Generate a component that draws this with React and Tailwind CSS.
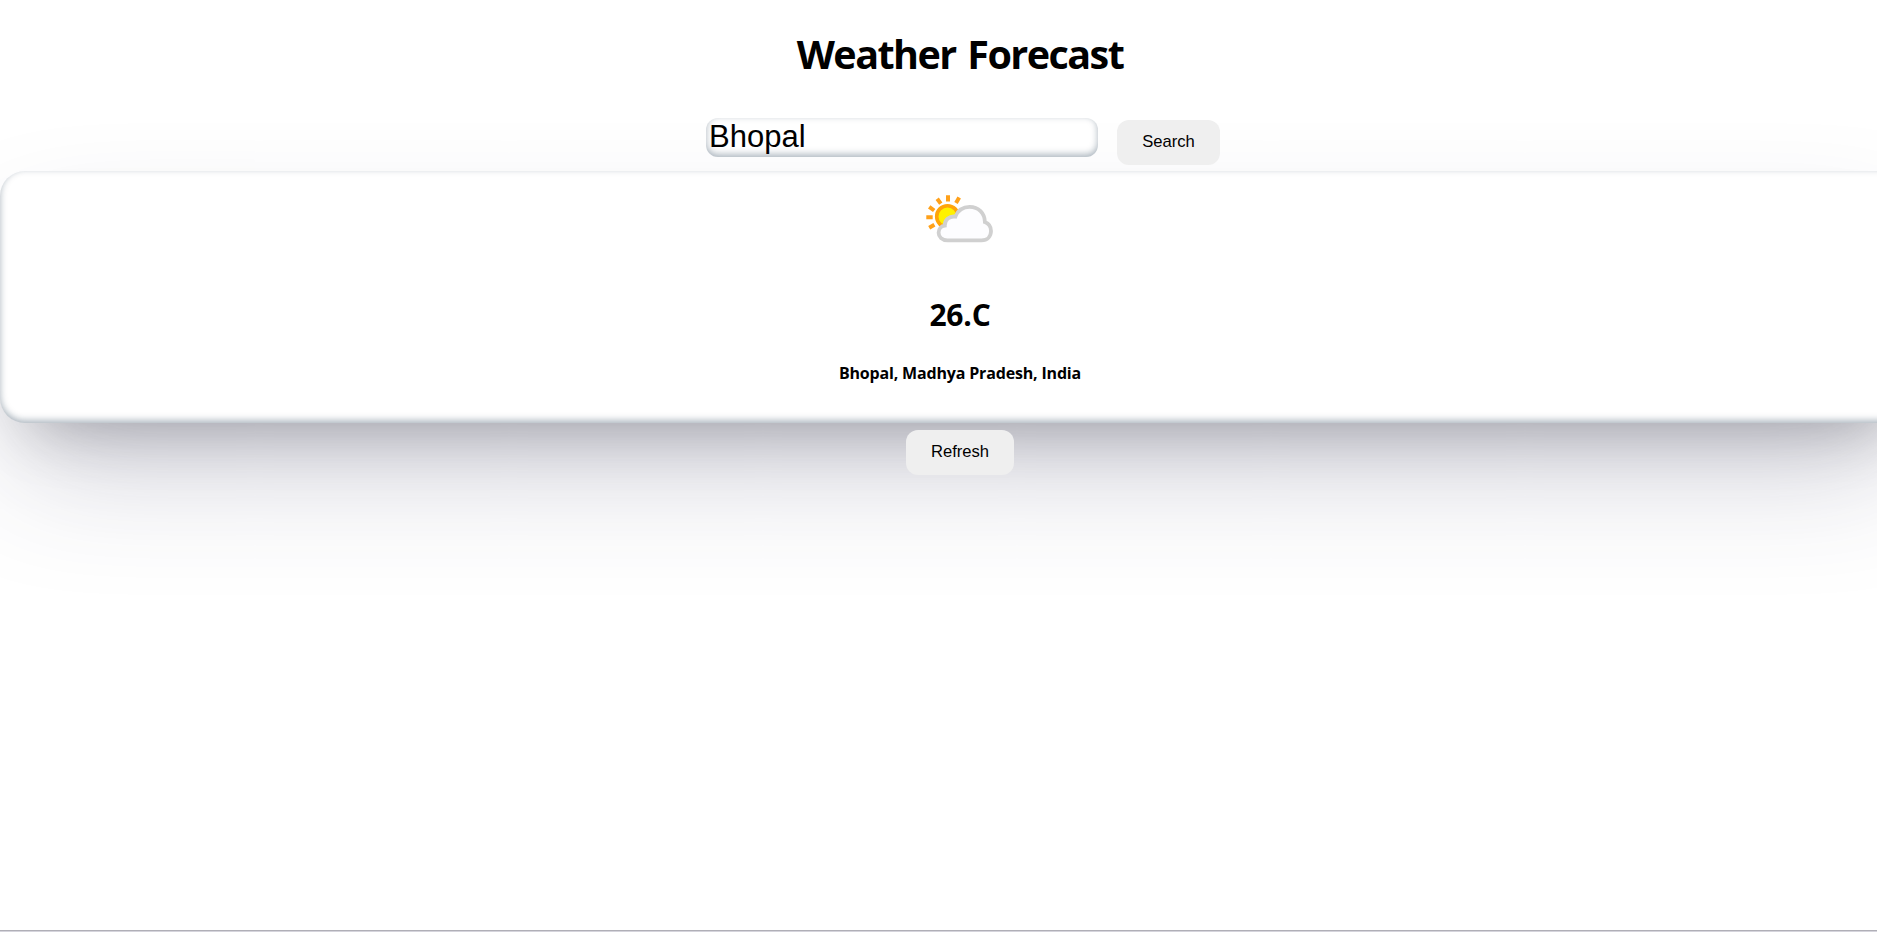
import { useState } from "react";

function PartlyCloudyIcon() {
  return (
    <svg className="block h-16 w-24" viewBox="0 0 96 64" fill="none" aria-hidden="true">
      <g stroke="#ffa11a" strokeWidth="4">
        <path d="M14.3 29.2h6.4M17.2 39.8l5.2-3M17.2 18.8l5 3.7M25.2 10.8l3.6 4.8M36 7.3v6.2M47.2 9.6l-3.2 5.4" />
      </g>
      <circle cx="35.5" cy="28.5" r="10.8" fill="#fff200" stroke="#ffa50a" strokeWidth="3.6" />
      <path
        d="M35.5 52.4C30 52.4 26.6 48.9 26.6 44.8C26.6 40.4 29.4 38 32.8 37.6C32.6 31.6 37.5 27.8 43.4 28.6C46 22.3 51 18.9 57.6 18.9C66.5 18.9 72.8 25 72.9 34.1C76.4 35.5 79 38.8 79 43C79 48.4 75.4 52.4 69.5 52.4Z"
        fill="#fdfdff"
        stroke="#d0d0d0"
        strokeWidth="3.8"
      />
    </svg>
  );
}

function Button({ children, className }) {
  return (
    <button
      className={`h-[45px] rounded-xl bg-[#efefef] pb-0.5 font-['Liberation_Sans',sans-serif] text-[16.6px] leading-[18px] text-black ${className}`}
    >
      {children}
    </button>
  );
}

export default function App() {
  const [city, setCity] = useState("Bhopal");
  return (
    <div className="flex h-[932px] w-full flex-col overflow-hidden bg-white font-['Open_Sans',sans-serif] text-black">
      <main className="flex w-[1920px] grow flex-col items-center">
        <h1 className="mt-[27px] text-[39.5px] leading-[54px] font-bold tracking-[-1.55px] [word-spacing:3px]">Weather Forecast</h1>
        <div className="relative z-10 mt-[37px] flex h-[53px] w-full items-start pl-[706px]">
          <input
            value={city}
            onChange={(e) => setCity(e.target.value)}
            aria-label="City"
            className="h-[39px] w-[392px] rounded-xl bg-white px-[3px] pb-0.5 font-['Liberation_Sans',sans-serif] text-[31px] leading-[34px] text-black shadow-[inset_0_-2.4px_7.2px_0_rgba(10,37,64,0.35)] outline-none"
          />
          <Button className="mt-0.5 ml-[19px] w-[103px]">Search</Button>
        </div>
        <section className="flex h-[252px] w-full flex-col items-center rounded-[25px] bg-white shadow-[0_62px_125px_-20px_rgba(50,50,93,0.25),0_32px_64px_-32px_rgba(0,0,0,0.3),inset_0_-2.4px_7.2px_0_rgba(10,37,64,0.35)]">
          <div className="mt-[17px]">
            <PartlyCloudyIcon />
          </div>
          <h2 className="mt-[43px] text-[30px] leading-[40px] font-bold tracking-[-0.2px]">26.C</h2>
          <h4 className="mt-[27px] text-base leading-[22px] font-bold tracking-[-0.17px]">Bhopal, Madhya Pradesh, India</h4>
        </section>
        <Button className="relative mt-[7px] w-[108px]">Refresh</Button>
      </main>
      <footer className="h-0.5 w-full border-t border-[#b0afb7] bg-[#d5d4dc]" />
    </div>
  );
}
